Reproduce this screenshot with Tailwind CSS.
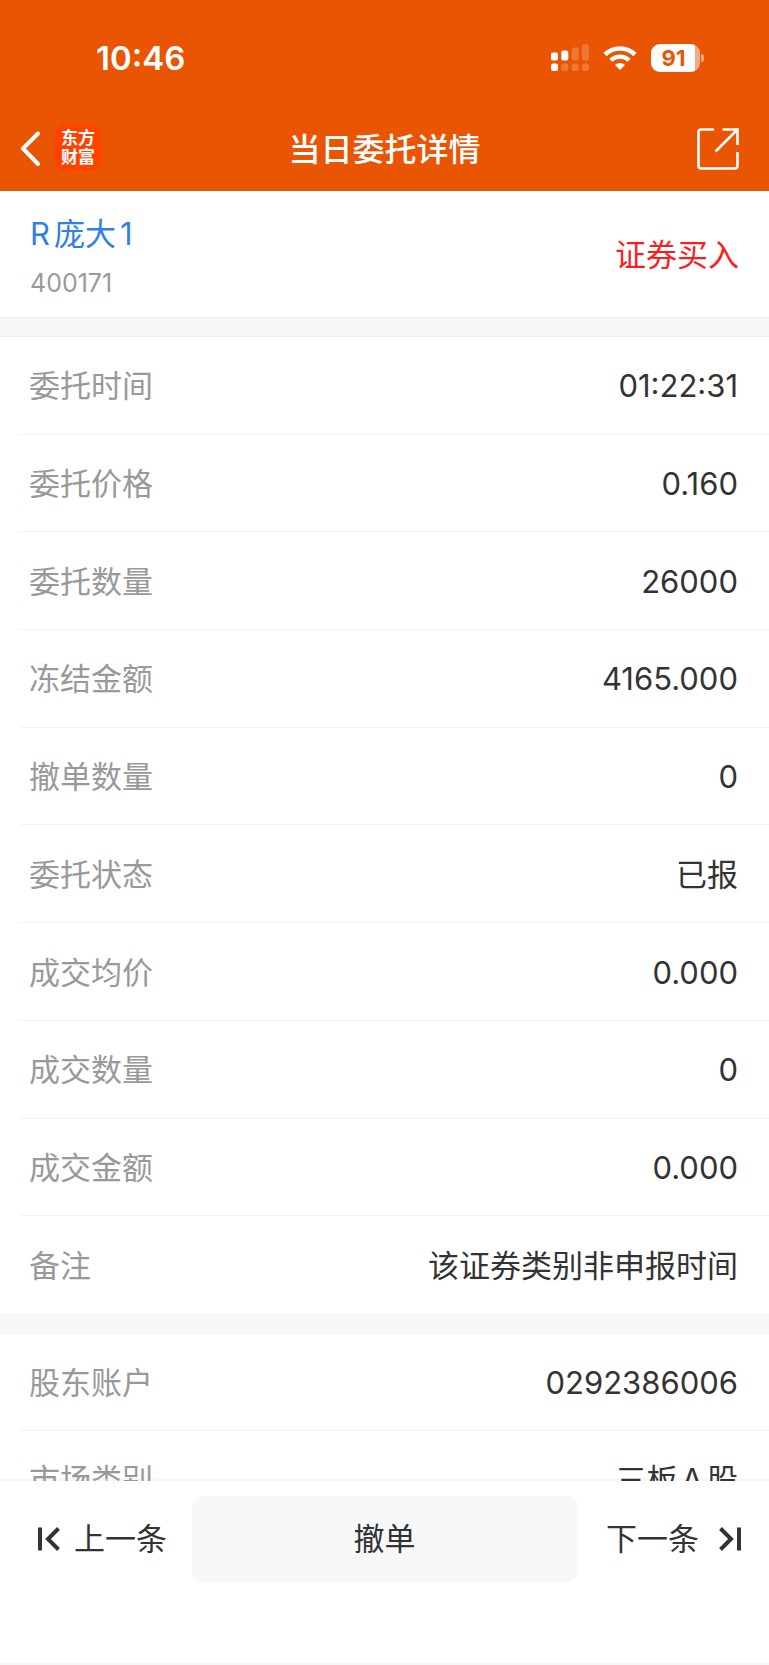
<!DOCTYPE html>
<html lang="zh-CN">
  <head>
    <meta charset="utf-8" />
    <meta name="viewport" content="width=device-width, initial-scale=1" />
    <title>当日委托详情</title>
    <script src="https://cdn.jsdelivr.net/npm/@tailwindcss/browser@4"></script>
  </head>
  <body
    class="h-screen flex flex-col bg-white text-[#333333] text-[31px] leading-10 font-['Inter','Noto_Sans_CJK_SC',sans-serif]"
  >
    <header class="bg-[#ea5504] text-white shrink-0">
      <!-- Status bar -->
      <div class="h-[108px] pt-2 pl-24 pr-[65px] flex items-center justify-between">
        <span class="text-[33px] font-semibold">10:46</span>
        <div class="flex items-center gap-3.5">
          <svg class="w-[38px] h-7" viewBox="0 0 38 28" fill="currentColor">
            <rect x="0" y="8.500" width="7" height="8" rx="2" />
            <rect x="10.300" y="6.500" width="7" height="10" rx="2" />
            <rect x="20.700" y="3.500" width="7" height="13" rx="2" opacity=".2" />
            <rect x="31" y="0.300" width="7" height="16.200" rx="2" opacity=".2" />
            <rect x="0" y="19.500" width="7" height="7.500" rx="2" />
            <rect x="10.300" y="19.500" width="7" height="7.500" rx="2" opacity=".2" />
            <rect x="20.700" y="19.500" width="7" height="7.500" rx="2" opacity=".2" />
            <rect x="31" y="19.500" width="7" height="7.500" rx="2" opacity=".2" />
          </svg>
          <svg class="w-[34px] h-6" viewBox="0 0 34 24" fill="none" stroke="currentColor">
            <path d="M2 8.500a21.600 21.600 0 0 1 30 0" stroke-width="4.600" />
            <path d="M7.800 14.300a13.400 13.400 0 0 1 18.400 0" stroke-width="4.200" />
            <path
              d="M17 24l-5-5a7.200 7.200 0 0 1 10 0z"
              fill="currentColor"
              stroke="none"
            />
          </svg>
          <div class="flex items-center gap-px">
            <div
              class="w-[49px] h-7 rounded-[9px] bg-linear-to-r from-white from-90% to-white/50 to-90% pr-1 text-center text-[22px] leading-7 font-bold text-[#ea5504]"
            >
              91
            </div>
            <div class="w-[3px] h-2 rounded-r-full bg-white/50"></div>
          </div>
        </div>
      </div>

      <!-- Title bar -->
      <div class="h-[83px] px-5 grid grid-cols-[1fr_auto_1fr] items-center">
        <div class="pb-1 flex items-center gap-3.5">
          <button aria-label="返回">
            <svg
              class="w-[21px] h-9"
              viewBox="0 0 21 36"
              fill="none"
              stroke="currentColor"
              stroke-width="4"
              stroke-linecap="round"
              stroke-linejoin="round"
            >
              <path d="M18 3.500L3 18.500l15 15.500" />
            </svg>
          </button>
          <div
            class="w-[46px] h-[46px] pt-1 rounded-[10px] bg-[#ff4200] text-center text-[17px] leading-[19px] font-bold"
          >
            东方<br />财富
          </div>
        </div>
        <h1 class="text-[32px] font-medium">当日委托详情</h1>
        <button class="justify-self-end pr-2.5 pb-0.5" aria-label="分享">
          <svg
            class="w-[42px] h-[42px]"
            viewBox="0 0 42 42"
            fill="none"
            stroke="currentColor"
            stroke-width="2.600"
          >
            <path d="M17 1.500H4A2.500 2.500 0 0 0 1.500 4v34A2.500 2.500 0 0 0 4 40.500h34a2.500 2.500 0 0 0 2.500-2.500V24" />
            <path d="M25.500 1.500h15V17M40 2L18.500 23.500" />
          </svg>
        </button>
      </div>
    </header>

    <main
      class="flex-1 min-h-0 overflow-hidden bg-white shadow-[inset_0_-3px_0_#f7f7f7]"
    >
      <section class="px-[30px] pt-4 pb-[11px] flex items-center justify-between">
        <div>
          <h2 class="text-[#2f80e7] leading-[54px] flex gap-1">
            <span>R</span><span>庞大</span><span>1</span>
          </h2>
          <p class="text-[25px] text-[#999999] leading-[45px]">400171</p>
        </div>
        <p class="pb-1 text-[#fa1e1e]">证券买入</p>
      </section>

      <div class="h-5 bg-[#f6f7f9] border-y border-[#eeeff0]"></div>

      <dl id="orderRows" class="grid auto-rows-fr min-h-[977px]"></dl>

      <div class="h-5 bg-[#f6f7f9] border-y border-[#eeeff0]"></div>

      <dl id="accountRows" class="grid auto-rows-[97px]"></dl>
    </main>

    <footer
      class="shrink-0 h-[184px] bg-white border-b-3 border-[#f6f7f9] pt-[15px] px-7 grid grid-cols-[164px_1fr_164px] items-start"
    >
      <button class="h-[86px] pl-2.5 flex items-center gap-3.5">
        <svg
          class="w-[22px] h-6"
          viewBox="0 0 22 24"
          fill="none"
          stroke="currentColor"
          stroke-width="4"
        >
          <path d="M2 .500v23M20.500 1.500L10 12l10.500 10.500" />
        </svg>
        上一条
      </button>
      <button class="h-[86px] rounded-[10px] bg-[#f7f8fa]">撤单</button>
      <button class="h-[86px] flex items-center justify-end gap-5">
        下一条
        <svg
          class="w-[22px] h-6"
          viewBox="0 0 22 24"
          fill="none"
          stroke="currentColor"
          stroke-width="4"
        >
          <path d="M20 .500v23M1.500 1.500L12 12 1.500 22.500" />
        </svg>
      </button>
    </footer>

    <script>
      const orderRows = [
        ["委托时间", "01:22:31"],
        ["委托价格", "0.160"],
        ["委托数量", "26000"],
        ["冻结金额", "4165.000"],
        ["撤单数量", "0"],
        ["委托状态", "已报"],
        ["成交均价", "0.000"],
        ["成交数量", "0"],
        ["成交金额", "0.000"],
        ["备注", "该证券类别非申报时间"],
      ];
      const accountRows = [
        ["股东账户", "0292386006"],
        ["市场类别", "三板<span class='mx-1'>A</span>股"],
      ];

      function renderRows(id, rows) {
        document.getElementById(id).innerHTML = rows
          .map(
            ([label, value]) => `
            <div class="ml-5 pt-0.5 pl-[9px] pr-[31px] flex items-center justify-between border-b border-[#f3f3f3] last:border-transparent">
              <dt class="text-[#999999]">${label}</dt>
              <dd>${value}</dd>
            </div>
          `
          )
          .join("");
      }

      renderRows("orderRows", orderRows);
      renderRows("accountRows", accountRows);
    </script>
  </body>
</html>
